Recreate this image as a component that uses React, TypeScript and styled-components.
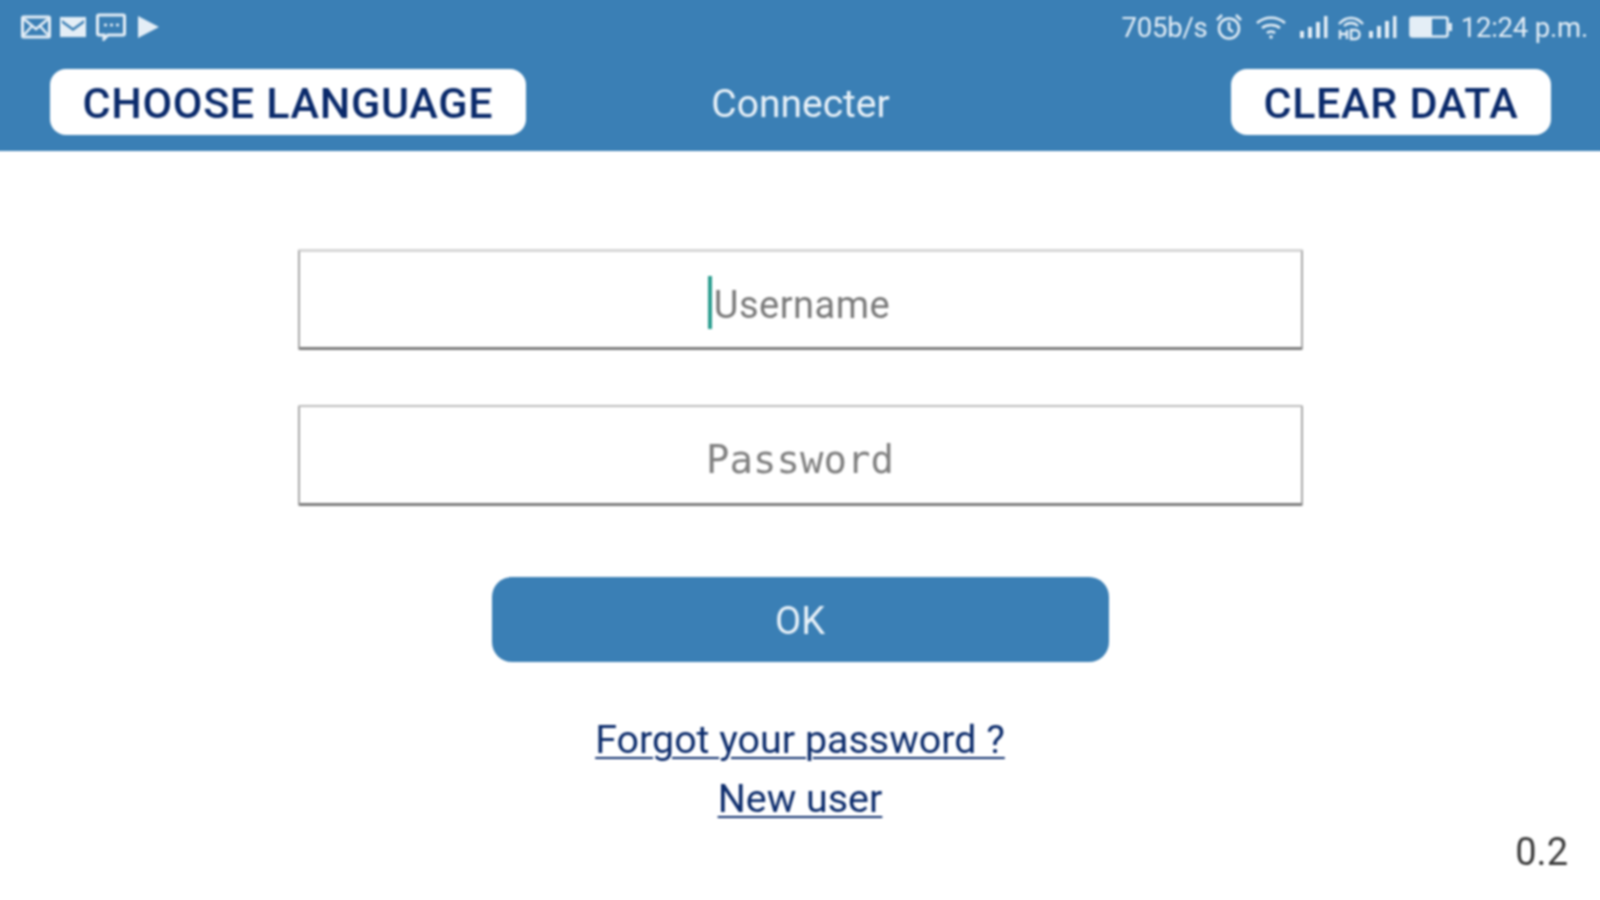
import React from 'react';
import styled, { createGlobalStyle } from 'styled-components';

const Global = createGlobalStyle`
  html, body { margin: 0; padding: 0; background: #fff; }
  body { font-family: Roboto, "Liberation Sans", sans-serif; }
`;

const Viewport = styled.div`
  width: 1600px;
  height: 900px;
  overflow: hidden;
`;

const Page = styled.div`
  width: 1616px;
  height: 916px;
  margin: -8px;
  display: flex;
  flex-direction: column;
  background: #fff;
  filter: blur(0.9px);
`;

const Header = styled.header`
  box-sizing: border-box;
  height: 159px;
  padding: 8px 8px 0;
  flex: none;
  background: #3a7fb5;
  display: flex;
  flex-direction: column;
`;

const StatusBar = styled.div`
  height: 54px;
  flex: none;
  display: flex;
  align-items: center;
  justify-content: space-between;
  padding: 0 12px 0 21px;
  color: #e4eef6;
`;

const StatusGroup = styled.div`
  display: flex;
  align-items: center;
`;

const NotifIcons = styled(StatusGroup)`
  gap: 8px;
`;

const StatusText = styled.span<{ $gap?: number }>`
  font-size: 27.5px;
  line-height: 32px;
  padding-top: 2px;
  letter-spacing: -0.2px;
  margin-left: ${(p) => p.$gap ?? 0}px;
`;

const StatusIcon = styled.svg<{ $gap?: number }>`
  display: block;
  flex: none;
  margin-left: ${(p) => p.$gap ?? 0}px;
`;

const Toolbar = styled.div`
  flex: 1;
  display: grid;
  grid-template-columns: 1fr auto 1fr;
  align-items: start;
  padding: 15px 49px 0 50px;
`;

const HeaderButton = styled.button<{ $end?: boolean }>`
  justify-self: ${(p) => (p.$end ? 'end' : 'start')};
  height: 66px;
  padding: 2px 32.5px 0;
  border: none;
  border-radius: 16px;
  background: #fff;
  color: #0a2a6b;
  font-family: Roboto, "Liberation Sans", sans-serif;
  font-size: 43px;
  font-weight: 500;
  letter-spacing: 0.7px;
  white-space: nowrap;
`;

const Title = styled.h1`
  margin: 0;
  height: 66px;
  line-height: 70px;
  color: #e8f1f8;
  font-size: 39px;
  font-weight: 400;
`;

const Main = styled.main`
  position: relative;
  flex: 1;
  display: flex;
  flex-direction: column;
  align-items: center;
  padding-top: 98px;
`;

const Field = styled.div<{ $mb: number; $soft?: boolean }>`
  box-sizing: border-box;
  width: 1005px;
  height: 101px;
  margin-bottom: ${(p) => p.$mb}px;
  display: flex;
  align-items: center;
  justify-content: center;
  background: #fff;
  border: ${(p) => (p.$soft ? '3px solid #d6d6d6' : '2px solid #bdbdbd')};
  border-left: 2px solid #a8a8a8;
  border-right: 2px solid #a8a8a8;
  border-bottom: 3px solid #7d7d7d;
  border-radius: 2px;
  padding-top: 9px;
`;

const Caret = styled.span`
  width: 4px;
  height: 53px;
  margin: -4px 2px 0 -2px;
  background: #2a9d8f;
`;

const UsernameText = styled.span`
  color: #7a7a7a;
  font-size: 38px;
  letter-spacing: 0.5px;
  margin-top: 1px;
`;

const PasswordText = styled.span`
  color: #808080;
  font-family: "DejaVu Sans Mono", "Liberation Mono", monospace;
  font-size: 39px;
  margin-top: -1px;
`;

const OkButton = styled.button`
  width: 617px;
  height: 85px;
  padding: 3px 0 0;
  border: none;
  border-radius: 20px;
  background: #3a7fb5;
  color: #e8f1f8;
  font-family: Roboto, "Liberation Sans", sans-serif;
  font-size: 38px;
  margin-bottom: 48px;
`;

const LinkText = styled.a`
  color: #0c2c6c;
  font-size: 39.4px;
  line-height: 59px;
  text-decoration: underline;
  text-decoration-thickness: 2px;
  text-underline-offset: 4px;
`;

const Version = styled.span`
  position: absolute;
  right: 40px;
  bottom: 34px;
  color: #3a3a3a;
  font-size: 38px;
`;

const Wh = '#e4eef6';

export default function App() {
  return (
    <Viewport>
      <Global />
      <Page>
        <Header>
          <StatusBar>
            <NotifIcons>
              <StatusIcon width="30" height="24" viewBox="0 0 30 24" fill="none" stroke={Wh} strokeWidth="3">
                <rect x="1.5" y="2" width="27" height="20" rx="1" />
                <path d="M3 4l12 10L27 4M3 20l8-9M27 20l-8-9" strokeWidth="2.5" />
              </StatusIcon>
              <StatusIcon width="28" height="24" viewBox="0 0 28 24" fill={Wh}>
                <path d="M1 2h26v20H1z" />
                <path d="M3 5l11 8 11-8v3l-11 8-11-8z" fill="#3a7fb5" />
              </StatusIcon>
              <StatusIcon $gap={1} width="30" height="28" viewBox="0 0 30 28" fill="none" stroke={Wh} strokeWidth="3">
                <path d="M3 2h24a1.5 1.5 0 0 1 1.5 1.5v17a1.5 1.5 0 0 1-1.5 1.5H12l-4 4v-4H3a1.5 1.5 0 0 1-1.5-1.5v-17A1.5 1.5 0 0 1 3 2z" />
                <path d="M8 12h3M14 12h3M20 12h3" strokeWidth="2.5" />
              </StatusIcon>
              <StatusIcon $gap={2} width="24" height="26" viewBox="0 0 24 26" fill={Wh}>
                <path d="M2 2l21 11L2 24z" />
              </StatusIcon>
            </NotifIcons>
            <StatusGroup>
              <StatusText>705b/s</StatusText>
              <StatusIcon $gap={7} width="28" height="28" viewBox="0 0 28 28" fill="none" stroke={Wh} strokeWidth="2.5">
                <circle cx="14" cy="15.500" r="10" />
                <path d="M14 9v7l4 3M2 7l5-5M26 7l-5-5" />
              </StatusIcon>
              <StatusIcon $gap={12} width="32" height="26" viewBox="0 0 32 26" fill="none" stroke={Wh} strokeWidth="2.6">
                <path d="M2 9c8-7 20-7 28 0M7 14c5-4 13-4 18 0M12 19c2-2 6-2 8 0" />
                <circle cx="16" cy="23" r="1.800" fill={Wh} stroke="none" />
              </StatusIcon>
              <StatusIcon $gap={12} width="30" height="24" viewBox="0 0 30 24" fill={Wh}>
                <path d="M1 16h4v7H1zM9 12h4v11H9zM17 7h4v16h-4zM25 1h3.500v22H25z" />
              </StatusIcon>
              <StatusIcon $gap={8} width="28" height="28" viewBox="0 0 28 28" fill="none" stroke={Wh} strokeWidth="2.4">
                <path d="M2 11c7-8 17-8 24 0M7 13c4-4 10-4 14 0" />
                <path d="M3 17v9M10 17v9M3 21h7M14 17v9h4c6 0 6-9 0-9z" />
              </StatusIcon>
              <StatusIcon $gap={3} width="30" height="24" viewBox="0 0 30 24" fill={Wh}>
                <path d="M1 16h4v7H1zM9 11h4v12H9zM17 6h4v17h-4zM25 1h3.500v22H25z" />
              </StatusIcon>
              <StatusIcon $gap={11} width="44" height="22" viewBox="0 0 44 22">
                <rect x="1.500" y="1.500" width="37" height="19" rx="2" fill="none" stroke={Wh} strokeWidth="2.6" />
                <rect x="2" y="2" width="21" height="18" fill={Wh} />
                <rect x="40" y="7" width="3" height="8" fill={Wh} />
              </StatusIcon>
              <StatusText $gap={8}>12:24 p.m.</StatusText>
            </StatusGroup>
          </StatusBar>
          <Toolbar>
            <HeaderButton>CHOOSE LANGUAGE</HeaderButton>
            <Title>Connecter</Title>
            <HeaderButton $end>CLEAR DATA</HeaderButton>
          </Toolbar>
        </Header>
        <Main>
          <Field $mb={55} $soft>
            <Caret />
            <UsernameText>Username</UsernameText>
          </Field>
          <Field $mb={71}>
            <PasswordText>Password</PasswordText>
          </Field>
          <OkButton>OK</OkButton>
          <LinkText href="#">Forgot your password ?</LinkText>
          <LinkText href="#">New user</LinkText>
          <Version>0.2</Version>
        </Main>
      </Page>
    </Viewport>
  );
}
